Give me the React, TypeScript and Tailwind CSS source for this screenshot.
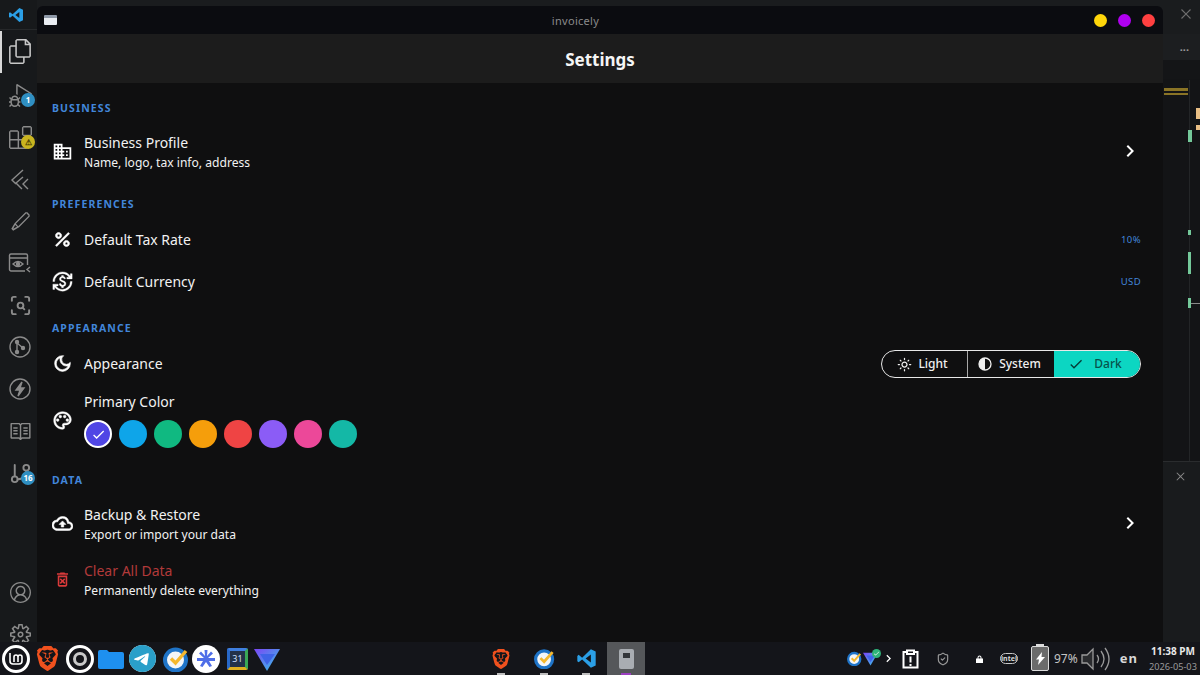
import type { ReactNode } from "react";
import {
  MdBusiness,
  MdCheck,
  MdChevronRight,
  MdCurrencyExchange,
  MdOutlineCloudUpload,
  MdOutlineDarkMode,
  MdOutlineDeleteForever,
  MdOutlineLightMode,
  MdOutlinePalette,
  MdPercent,
} from "react-icons/md";
import {
  VscAccount,
  VscBook,
  VscClose,
  VscDebugAlt,
  VscEdit,
  VscExtensions,
  VscFiles,
  VscSettingsGear,
} from "react-icons/vsc";
import { SiBrave, SiTelegram } from "react-icons/si";
import { LuGitBranch, LuScanSearch, LuShieldCheck } from "react-icons/lu";

function VsLogo({ size = 16 }: { size?: number }) {
  return (
    <svg width={size} height={size} viewBox="0 0 24 24">
      <path d="M17 1.500 22.500 4v16L17 22.500 7 13l-4 3.200L1.500 15V9L3 7.800 7 11 17 1.500Zm0 6L11 12l6 4.500v-9Z" fill="#2b9fe6" />
    </svg>
  );
}

function Brave({ size = 25 }: { size?: number }) {
  return <SiBrave size={size} className="text-[#f1511e]" />;
}

function TickTick({ size = 26 }: { size?: number }) {
  return (
    <svg width={size} height={size} viewBox="0 0 26 26">
      <circle cx="12.500" cy="14" r="10.500" fill="#f4f6f8" stroke="#1f74c8" strokeWidth="4" />
      <path d="M8 12.500 12.500 17 23 5" fill="none" stroke="#f5b82e" strokeWidth="3.400" />
    </svg>
  );
}

function Proton({ size = 26 }: { size?: number }) {
  return (
    <svg width={size} height={size} viewBox="0 0 26 26">
      <defs>
        <linearGradient id="pv" x1="0" y1="0" x2="1" y2="1">
          <stop offset="0" stopColor="#7b45f5" />
          <stop offset="1" stopColor="#35c7e8" />
        </linearGradient>
      </defs>
      <path d="M0 3 H26 L13 25 Z" fill="url(#pv)" />
      <path d="M6 8 H21 L13 19 Z" fill="#3f63e8" />
    </svg>
  );
}

function Section({ label, children }: { label: string; children: ReactNode }) {
  return (
    <section>
      <h2 className="h-4 text-[10.5px] leading-4 font-bold tracking-[1.1px] text-[#4286da]">{label}</h2>
      {children}
    </section>
  );
}

function Row({
  icon,
  title,
  sub,
  danger,
  right,
}: {
  icon: ReactNode;
  title: string;
  sub?: string;
  danger?: boolean;
  right?: ReactNode;
}) {
  return (
    <div className={`flex items-center ${sub ? "h-14" : "h-[42px]"}`}>
      {/* the icons carry an empty bounding path, it must not get the thicker stroke */}
      <div
        className={`w-[32px] pb-[2px] text-[21px] [&_path[fill=none]]:[stroke:none] ${
          danger ? "text-[#d93a3a]" : "text-white"
        }`}
      >
        {icon}
      </div>
      <div className="flex-1">
        {sub ? (
          <>
            <div className={`mb-[2px] text-[14px] leading-[18px] ${danger ? "text-[#b23a3a]" : "text-[#f2f2f2]"}`}>
              {title}
            </div>
            <div className="text-[12.1px] leading-[17px] text-[#f2f2f2]">{sub}</div>
          </>
        ) : (
          <div className="pb-[1px] text-[14px] leading-5 text-[#f2f2f2]">{title}</div>
        )}
      </div>
      {right}
    </div>
  );
}

const swatches = ["#5046e5", "#0ea5e9", "#10b981", "#f59e0b", "#ef4444", "#8b5cf6", "#ec4899", "#14b8a6"];

function ActivityItem({ children, badge, badgeClass }: { children: ReactNode; badge?: string; badgeClass?: string }) {
  return (
    <div className="relative flex h-[42px] w-full items-center justify-center pl-[3px] text-[23px] text-[#8b8b8b]">
      {children}
      {badge && (
        <span
          className={`absolute top-[19px] right-[2px] flex h-[14px] min-w-[14px] items-center justify-center rounded-full px-[1px] text-[8px] font-bold text-white ${badgeClass}`}
        >
          {badge}
        </span>
      )}
    </div>
  );
}

export default function App() {
  return (
    <div className="flex h-[675px] w-[1200px] flex-col overflow-hidden bg-[#1a1c1e] font-['Noto_Sans',sans-serif]">
      <div className="flex h-[642px]">
        {/* editor activity bar */}
        <aside className="flex w-[37px] shrink-0 flex-col items-center overflow-hidden bg-[#17191b]">
          <div className="mb-[2px] flex h-[30px] w-full items-center justify-center border-b border-[#26282a] pr-[5px]">
            <VsLogo />
          </div>
          <div className="relative flex h-[42px] w-full items-center justify-center pb-[3px] pl-[3px] text-[25px] text-[#c8c8c8]">
            <span className="absolute -top-[1px] left-0 h-[42px] w-[2px] bg-[#d8d8d8]" />
            <VscFiles />
          </div>
          <ActivityItem badge="1" badgeClass="bg-[#2f8fc2]">
            <VscDebugAlt />
          </ActivityItem>
          <ActivityItem badge="⚠" badgeClass="bg-[#c9b420] !text-[#4b4200]">
            <VscExtensions />
          </ActivityItem>
          <ActivityItem>
            <svg width="22" height="22" viewBox="0 0 22 22" fill="none" stroke="#8b8b8b" strokeWidth="1.400">
              <path d="M14 2 3 12l4 4M14 9l-7 6 6 6M19 11l-5 5 5 5" />
            </svg>
          </ActivityItem>
          <ActivityItem>
            <VscEdit className="text-[21px]" />
          </ActivityItem>
          <ActivityItem>
            <svg width="24" height="22" viewBox="0 0 24 22" fill="none" stroke="#8b8b8b" strokeWidth="1.400">
              <path d="M17 19H3a1.500 1.500 0 0 1-1.500-1.500v-14A1.500 1.500 0 0 1 3 2h15a1.500 1.500 0 0 1 1.500 1.500V13M1.500 6h18" />
              <path d="M5 12q5-5 10 0q-5 5-10 0Z" />
              <circle cx="10" cy="12" r="1.500" fill="#8b8b8b" />
              <path d="M22 15l-3 2.500 3 2.500" />
            </svg>
          </ActivityItem>
          <ActivityItem>
            <LuScanSearch />
          </ActivityItem>
          <ActivityItem>
            <svg width="22" height="22" viewBox="0 0 22 22" fill="none" stroke="#8b8b8b" strokeWidth="1.400">
              <circle cx="11" cy="11" r="10" />
              <path d="M8 5v12M8 7l6 5" />
              <circle cx="8" cy="6" r="1.500" fill="#8b8b8b" />
              <circle cx="8" cy="16" r="1.500" fill="#8b8b8b" />
              <circle cx="14" cy="12" r="1.500" fill="#8b8b8b" />
            </svg>
          </ActivityItem>
          <ActivityItem>
            <svg width="22" height="22" viewBox="0 0 22 22" fill="none" stroke="#8b8b8b" strokeWidth="1.400">
              <circle cx="11" cy="11" r="10" />
              <path d="M13 4 7 12h4l-2 6 6-8h-4Z" fill="#8b8b8b" />
            </svg>
          </ActivityItem>
          <ActivityItem>
            <VscBook />
          </ActivityItem>
          <ActivityItem badge="16" badgeClass="bg-[#2f8fc2]">
            <LuGitBranch />
          </ActivityItem>
          <div className="mt-auto -mb-[3px] flex flex-col items-center gap-[21px] pl-[3px] text-[21px] text-[#8b8b8b]">
            <VscAccount />
            <VscSettingsGear />
          </div>
        </aside>

        {/* app window */}
        <main className="flex w-[1126px] shrink-0 flex-col pt-[6px]">
          <div className="flex h-[28px] items-center rounded-t-[6px] bg-[#0b0c10] pr-[8px] pl-[7px]">
            <div className="h-[10px] w-[13px] rounded-[1px] border-t-[3px] border-[#8f99a8] bg-[#e9edf2]" />
            <div className="flex-1 pt-[2px] text-center text-[11px] tracking-[0.3px] text-[#8a8a8a]">invoicely</div>
            <div className="flex items-center gap-[11px]">
              <span className="h-[13px] w-[13px] rounded-full bg-[#ffd60a]" />
              <span className="h-[13px] w-[13px] rounded-full bg-[#b000f0]" />
              <span className="h-[13px] w-[13px] rounded-full bg-[#ff4040]" />
            </div>
          </div>
          <header className="flex h-[49px] items-center justify-center bg-[#1c1c1c] pt-[2px] text-[17px] font-bold text-[#f5f5f5]">
            Settings
          </header>
          <div className="flex flex-1 flex-col bg-[#0f0f10] pt-[17px] pr-[22px] pl-[15px]">
            <Section label="BUSINESS">
              <div className="mt-2 mb-4">
                <Row
                  icon={<MdBusiness />}
                  title="Business Profile"
                  sub="Name, logo, tax info, address"
                  right={<MdChevronRight className="mr-[-1px] mb-[2px] text-[24px] text-white" />}
                />
              </div>
            </Section>
            <Section label="PREFERENCES">
              <div className="mt-[7px] mb-[17px]">
                <Row
                  icon={<MdPercent className="[stroke-width:0.7]" />}
                  title="Default Tax Rate"
                  right={<span className="text-[9.5px] tracking-[0.4px] text-[#4286da]">10%</span>}
                />
                <Row
                  icon={<MdCurrencyExchange className="[stroke-width:0.4]" />}
                  title="Default Currency"
                  right={<span className="text-[9.5px] tracking-[0.4px] text-[#4286da]">USD</span>}
                />
              </div>
            </Section>
            <Section label="APPEARANCE">
              <div className="mt-[7px] mb-6">
                <Row
                  icon={<MdOutlineDarkMode className="[stroke-width:0.7]" />}
                  title="Appearance"
                  right={
                    <div className="flex h-7 w-[260px] overflow-hidden rounded-full border border-[#e8e8e8] text-[12px] font-medium">
                      <div className="flex w-[86px] items-center justify-center gap-[6px] border-r border-[#a8a8a8] pr-[4px] text-[#efefef]">
                        <MdOutlineLightMode className="text-[15px]" />
                        Light
                      </div>
                      <div className="flex w-[86px] items-center justify-center gap-[7px] pr-[3px] text-[#efefef]">
                        <svg width="14" height="14" viewBox="0 0 14 14">
                          <circle cx="7" cy="7" r="6" fill="none" stroke="#efefef" strokeWidth="1.300" />
                          <path d="M7 1a6 6 0 0 0 0 12Z" fill="#efefef" />
                        </svg>
                        System
                      </div>
                      <div className="flex flex-1 items-center justify-center gap-[10px] bg-[#0cd6c2] pr-[4px] text-[#07524b]">
                        <MdCheck className="text-[16px] text-[#063b36]" />
                        Dark
                      </div>
                    </div>
                  }
                />
                <div className="mt-[7px] flex">
                  <div className="w-[32px] pt-[18px] text-[21px] text-white [&_path[fill=none]]:[stroke:none]">
                    <MdOutlinePalette className="[stroke-width:0.6]" />
                  </div>
                  <div>
                    <div className="mb-[9px] text-[14px] leading-[19px] text-[#f2f2f2]">Primary Color</div>
                    <div className="flex gap-[7px]">
                      {swatches.map((c, i) => (
                        <span
                          key={c}
                          className={`flex h-7 w-7 items-center justify-center rounded-full text-white ${
                            i === 0 ? "border-2 border-white" : ""
                          }`}
                          style={{ backgroundColor: c }}
                        >
                          {i === 0 && <MdCheck className="text-[15px]" />}
                        </span>
                      ))}
                    </div>
                  </div>
                </div>
              </div>
            </Section>
            <Section label="DATA">
              <div className="mt-2">
                <Row
                  icon={<MdOutlineCloudUpload className="[stroke-width:0.6]" />}
                  title="Backup & Restore"
                  sub="Export or import your data"
                  right={<MdChevronRight className="mr-[-1px] mb-[2px] text-[24px] text-white" />}
                />
                <Row
                  icon={<MdOutlineDeleteForever className="ml-px text-[19px]" />}
                  title="Clear All Data"
                  sub="Permanently delete everything"
                  danger
                />
              </div>
            </Section>
          </div>
        </main>

        {/* editor behind the window */}
        <aside className="relative w-[37px] shrink-0 bg-[#131416]">
          <div className="flex h-[34px] items-center justify-end bg-[#1a1c1e] pr-[5px] pb-[6px] text-[18px] text-[#6f6f6f]">
            <VscClose />
          </div>
          <div className="flex h-[26px] items-center justify-end bg-[#1c1e20] pr-[11px] text-[11px] font-bold text-[#9a9a9a]">
            ...
          </div>
          <div className="h-[19px] bg-[#141517]" />
          <span className="absolute top-[80px] bottom-[181px] left-[26px] w-px bg-[#232527]" />
          <span className="absolute top-[88px] left-px h-[3px] w-[24px] bg-[#8a7426]" />
          <span className="absolute top-[93px] left-px h-[2px] w-[24px] bg-[#8a7426]" />
          <span className="absolute top-[108px] left-[33px] h-[11px] w-[4px] bg-[#e9bf85]" />
          <span className="absolute top-[125px] left-[33px] h-[5px] w-[4px] bg-[#e9bf85]" />
          <span className="absolute top-[130px] left-[25px] h-[12px] w-[4px] bg-[#74c99a]" />
          <span className="absolute top-[230px] left-[25px] h-[5px] w-[3px] bg-[#74c99a]" />
          <span className="absolute top-[252px] left-[25px] h-[22px] w-[3px] bg-[#74c99a]" />
          <span className="absolute top-[298px] left-[25px] h-[10px] w-[3px] bg-[#74c99a]" />
          <span className="absolute top-[303px] left-[28px] h-px w-[9px] bg-[#8a8a8a]" />
          <div className="absolute top-[461px] right-0 bottom-0 left-0 border-t border-[#2a2c2e] bg-[#191b1d] text-[#8a8a8a]">
            <VscClose className="absolute top-[7px] left-[10px] text-[15px]" />
          </div>
        </aside>
      </div>

      {/* desktop panel */}
      <footer className="flex h-[33px] items-center bg-[#14151a]">
        <div className="flex w-[290px] items-center pl-[2px]">
          <div className="flex h-[28px] w-[28px] items-center justify-center rounded-full border-[3px] border-white">
            <svg width="16" height="14" viewBox="0 0 16 14" fill="none" stroke="white" strokeWidth="1.600">
              <path d="M2 1v8a3 3 0 0 0 3 3h6a3 3 0 0 0 3-3V5a2 2 0 0 0-4 0v5M6 10V5a2 2 0 0 1 4 0" />
            </svg>
          </div>
          <div className="ml-[5px]">
            <Brave />
          </div>
          <div className="ml-[6px] flex h-[28px] w-[28px] items-center justify-center rounded-full border-[3px] border-white">
            <div className="h-[14px] w-[14px] rounded-full border-[3px] border-[#c9c9c9]" />
          </div>
          <svg className="ml-[3px]" width="28" height="22" viewBox="0 0 28 22">
            <path d="M1 4a2 2 0 0 1 2-2h7l2 2h13a2 2 0 0 1 2 2v13a2 2 0 0 1-2 2H3a2 2 0 0 1-2-2Z" fill="#1e90f0" />
          </svg>
          <div className="ml-[4px] flex h-[27px] w-[27px] items-center justify-center rounded-full bg-white">
            <SiTelegram size={27} className="text-[#2a9fc9]" />
          </div>
          <div className="ml-[7px]">
            <TickTick />
          </div>
          <div className="ml-[3px] flex h-[28px] w-[28px] items-center justify-center rounded-full bg-white text-[#4f6ee8]">
            <svg width="20" height="18" viewBox="0 0 20 18" fill="#4f6ee8">
              <path d="M8.500 0h3l-.5 6 4-4.500 2 2L12 8h7v3h-6l3 5-2.500 1L10 12l-3.500 5L4 16l3-5H1V8h7L3 3.500l2-2L9 6Z" />
            </svg>
          </div>
          <div className="ml-[7px] flex h-[22px] w-[21px] items-center justify-center rounded-[2px] border-[3px] border-t-[#3f7fe0] border-r-[#39a856] border-b-[#e0b020] border-l-[#2868c8] bg-[#23324a] text-[9px] text-[#cfe0ff]">
            31
          </div>
          <div className="ml-[6px]">
            <Proton />
          </div>
        </div>

        <div className="ml-[194px] flex items-center">
          <div className="relative flex h-[33px] w-[34px] items-center justify-center">
            <Brave size={20} />
            <span className="absolute bottom-0 h-[2px] w-[8px] bg-[#bdbdbd]" />
          </div>
          <div className="relative ml-[9px] flex h-[33px] w-[34px] items-center justify-center">
            <TickTick size={21} />
            <span className="absolute bottom-0 h-[2px] w-[8px] bg-[#bdbdbd]" />
          </div>
          <div className="relative ml-[8px] flex h-[33px] w-[34px] items-center justify-center">
            <VsLogo size={21} />
            <span className="absolute bottom-0 h-[2px] w-[8px] bg-[#bdbdbd]" />
          </div>
          <div className="relative ml-[4px] flex h-[33px] w-[38px] items-center justify-center bg-[#55575a]">
            <div className="flex h-[20px] w-[15px] items-start justify-center rounded-[2px] bg-[#a9adb2] pt-[4px]">
              <div className="h-[5px] w-[7px] bg-[#33363a]" />
            </div>
            <span className="absolute bottom-0 h-[2px] w-[10px] bg-[#9b3fc0]" />
          </div>
        </div>

        <div className="ml-[202px] flex flex-1 items-center text-[#d8d8d8]">
          <TickTick size={15} />
          <div className="relative ml-[1px]">
            <Proton size={15} />
            <span className="absolute -top-[2px] -right-[3px] flex h-[9px] w-[9px] items-center justify-center rounded-full bg-[#2fb37a] text-[7px] text-white">
              <MdCheck />
            </span>
          </div>
          <MdChevronRight className="ml-[3px] text-[15px] text-white" />
          <svg className="ml-[6px]" width="17" height="20" viewBox="0 0 17 20" fill="none" stroke="white" strokeWidth="2">
            <path d="M5 3H1.500v15.500h14V3H12M5 1.500h7v3.500H5Z" />
            <path d="M8.500 7.500v6M8.500 15v2" />
          </svg>
          <LuShieldCheck className="ml-[17px] text-[14px] text-[#9a9a9a]" />
          <svg className="ml-[26px]" width="7" height="8" viewBox="0 0 7 8" fill="white">
            <path d="M1.500 3.500V2.500a2 2 0 0 1 4 0v1H7V8H0V3.500Zm1 0h2V2.500a1 1 0 0 0-2 0Z" />
          </svg>
          <div className="ml-[17px] flex h-[11px] w-[18px] items-center justify-center rounded-full border border-[#c8c8c8] text-[7px] leading-none font-bold">
            intel
          </div>
          <div className="relative ml-[13px] flex h-[25px] w-[18px] items-center justify-center rounded-[2px] border border-[#dcdcdc] bg-[#6b6b6b]">
            <span className="absolute -top-[3px] h-[2px] w-[8px] bg-[#dcdcdc]" />
            <svg width="9" height="13" viewBox="0 0 9 13" fill="white">
              <path d="M6 0 0 7.500h3L2 13l7-8H5.500Z" />
            </svg>
          </div>
          <span className="ml-[5px] text-[12px] text-[#c4c4c4]">97%</span>
          <svg className="ml-[3px]" width="30" height="26" viewBox="0 0 30 26" fill="none" stroke="#9a9a9a">
            <path d="M1 9h5l6-6v20l-6-6H1Z" fill="#2a2b2e" strokeWidth="1.300" />
            <path d="M16 9q3 4 0 8M20 5q6 8 0 16M24 2q8 11 0 22" strokeWidth="1.300" />
          </svg>
          <span className="ml-[9px] text-[13px] font-bold tracking-[1px] text-[#d8d8d8]">en</span>
          <div className="ml-[11px] whitespace-nowrap text-center leading-[15px]">
            <div className="text-[10px] font-bold text-[#e8e8e8]">11:38 PM</div>
            <div className="text-[9.2px] text-[#9a9a9a]">2026-05-03</div>
          </div>
        </div>
      </footer>
    </div>
  );
}
